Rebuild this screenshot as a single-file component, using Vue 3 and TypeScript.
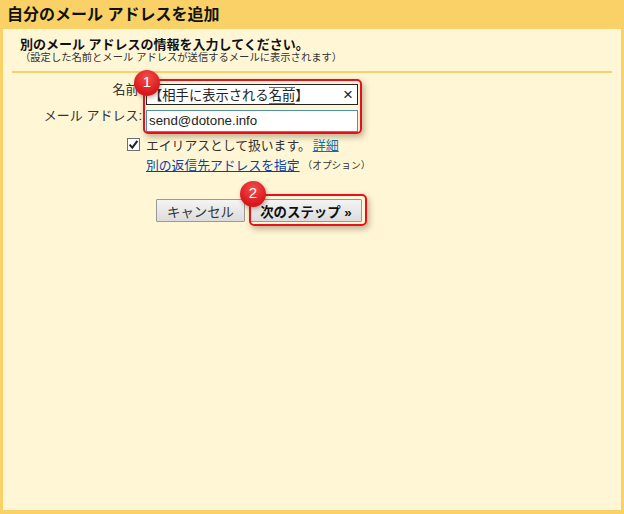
<script setup lang="ts">
const title = '自分のメール アドレスを追加'
</script>

<template>
  <div class="page">
    <h1 class="title">{{ title }}</h1>
    <div class="panel">
      <div class="intro">
        <div class="lead">別のメール アドレスの情報を入力してください。</div>
        <div class="note">（設定した名前とメール アドレスが送信するメールに表示されます）</div>
      </div>
      <div class="rule"></div>
      <div class="form">
        <div class="row name-row">
          <label class="label">名前:</label>
          <div class="input input-name"><span class="value"><span class="value-mark">【相手に表示される</span><span class="sel">名前</span>】</span><span class="clear">×</span></div>
        </div>
        <div class="row mail-row">
          <label class="label">メール アドレス:</label>
          <div class="input input-mail"><span class="value">send@dotone.info</span></div>
        </div>
        <div class="highlight hl-inputs"></div>
        <div class="badge badge-1">1</div>
        <div class="alias">
          <svg class="check" width="13" height="13" viewBox="0 0 13 13">
            <rect x="0.5" y="0.5" width="12" height="12" fill="#fff" stroke="#6e6e6e" />
            <path d="M2.6 6.6 L5.3 9.6 L10.4 2.8" fill="none" stroke="#222" stroke-width="2" />
          </svg>
          <span class="alias-text">エイリアスとして扱います。</span><a class="link">詳細</a>
        </div>
        <div class="reply">
          <a class="link">別の返信先アドレスを指定</a><span class="option">（オプション）</span>
        </div>
        <div class="buttons">
          <button class="btn">キャンセル</button>
          <button class="btn btn-next">次のステップ »</button>
          <div class="highlight hl-next"></div>
          <div class="badge badge-2">2</div>
        </div>
      </div>
    </div>
  </div>
</template>

<style>
html, body { margin: 0; background: #fad166; }
</style>

<style scoped>
.page {
  width: 624px;
  height: 514px;
  box-sizing: border-box;
  padding: 0 3px 4px;
  background: #fad166;
  display: flex;
  flex-direction: column;
  font-family: "Liberation Sans", "Noto Sans CJK JP", sans-serif;
  color: #222;
  overflow: hidden;
}
.title {
  margin: 0;
  height: 29px;
  line-height: 30px;
  padding-left: 4px;
  font-size: 16px;
  font-weight: 700;
  color: #111;
  flex: none;
}
.panel {
  flex: 1;
  background: #fff6d6;
  padding: 9px 9px 0;
}
.intro { padding-left: 8px; height: 26px; }
.lead { font-size: 13px; font-weight: 700; line-height: 14px; color: #111; }
.note { font-size: 10.3px; line-height: 12px; color: #333; }
.rule { height: 2px; background: #fad166; margin-top: 7px; }
.form { position: relative; margin-top: 9px; }
.row { display: flex; align-items: flex-start; height: 25px; }
.mail-row { margin-top: 1px; }
.label {
  width: 130px;
  padding-right: 1px;
  text-align: right;
  font-size: 13px;
  line-height: 16px;
  color: #333;
  flex: none;
}
.input {
  width: 212px;
  height: 21px;
  margin-left: 3px;
  align-self: center;
  box-sizing: border-box;
  display: flex;
  align-items: center;
  justify-content: space-between;
  background: #fff;
  font-size: 13.3px;
  color: #222;
  padding: 0 3px 0 2px;
}
.input-name { border: 1px solid #222; }
.input-mail { border: 1px solid #4d90a8; height: 22px; }
.value { white-space: nowrap; }
.sel { box-shadow: 0 -1px 0 #3b78c4, 0 1px 0 #3b78c4; }
.clear { font-size: 17px; line-height: 1; margin-right: 1px; color: #222; }
.highlight {
  position: absolute;
  border: 2px solid #e8101c;
  border-radius: 5px;
  box-shadow: 2px 3px 6px rgba(90, 70, 30, 0.4);
  pointer-events: none;
}
.hl-inputs { left: 131px; top: -3px; width: 215px; height: 51px; }
.badge {
  position: absolute;
  width: 26px;
  height: 26px;
  border-radius: 50%;
  background: radial-gradient(circle at 50% 30%, #f0504a, #d9161c 70%);
  color: #fff;
  font-size: 15px;
  line-height: 24px;
  text-align: center;
  box-shadow: 1px 2px 4px rgba(90, 70, 30, 0.4);
}
.badge-1 { left: 122px; top: -12px; }
.alias {
  display: flex;
  align-items: center;
  height: 20px;
  margin-top: 1px;
  padding-left: 115px;
  font-size: 12.8px;
  color: #333;
}
.check { margin-right: 6px; flex: none; }
.link { color: #0b3fa8; text-decoration: underline; cursor: pointer; }
.alias .link { color: #0f6fb5; font-size: 13px; margin-left: 2px; }
.reply {
  display: flex;
  align-items: center;
  height: 20px;
  padding-left: 134px;
  font-size: 12.8px;
}
.option { font-size: 9.7px; color: #333; margin: 2px 0 0 3px; }
.buttons {
  position: relative;
  display: flex;
  gap: 5px;
  margin-top: 25px;
  padding-left: 144px;
}
.btn {
  height: 23px;
  width: 89px;
  padding: 0;
  border: 1px solid #999;
  border-radius: 1px;
  background: linear-gradient(#f4f4f4, #dcdcdc);
  font-family: inherit;
  font-size: 13.4px;
  color: #333;
}
.btn-next { width: 112px; font-weight: 700; color: #111; }
.hl-next { left: 237px; top: -5px; width: 114px; height: 28px; }
.badge-2 { left: 228px; top: -18px; }
</style>
